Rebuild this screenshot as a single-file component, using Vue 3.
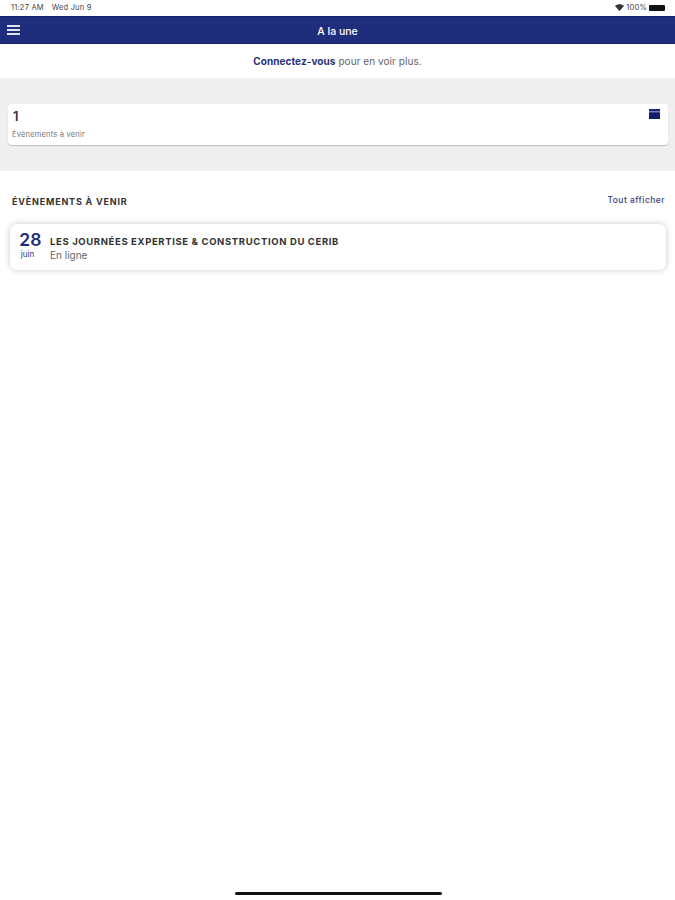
<template>
  <div class="screen">
    <div class="status-bar">
      <span>11:27 AM</span>
      <span class="status-date">Wed Jun 9</span>
      <span class="status-right">
        <svg class="wifi" viewBox="0 0 16 12" width="9" height="7">
          <path d="M8 12 0 3.500C4.500-1 11.500-1 16 3.500Z" fill="#333" />
        </svg>
        <span>100%</span>
        <span class="battery"><i></i></span>
      </span>
    </div>

    <header class="top-bar">
      <button class="menu-btn" aria-label="Menu">
        <span></span><span></span><span></span>
      </button>
      <h1>A la une</h1>
    </header>

    <div class="connect-row">
      <a class="connect-link">Connectez-vous</a> pour en voir plus.
    </div>

    <section class="stats-band">
      <div class="stat-card">
        <div>
          <div class="stat-value">1</div>
          <div class="stat-label">Évènements à venir</div>
        </div>
        <svg class="stat-icon" viewBox="0 0 11 11" width="11" height="11">
          <path d="M0 0h11v2.600H0z" fill="#1a2478" />
          <path d="M0 3.200h11V10H0z" fill="#141c6e" />
        </svg>
      </div>
    </section>

    <section class="events">
      <div class="events-head">
        <h2>ÉVÈNEMENTS À VENIR</h2>
        <a>Tout afficher</a>
      </div>
      <article v-for="event in events" :key="event.title" class="event-card">
        <div class="event-date">
          <div class="event-day">{{ event.day }}</div>
          <div class="event-month">{{ event.month }}</div>
        </div>
        <div class="event-body">
          <div class="event-title">{{ event.title }}</div>
          <div class="event-place">{{ event.place }}</div>
        </div>
      </article>
    </section>

    <div class="home-indicator"></div>
  </div>
</template>

<script setup>
const events = [
  {
    day: '28',
    month: 'juin',
    title: 'LES JOURNÉES EXPERTISE & CONSTRUCTION DU CERIB',
    place: 'En ligne'
  }
]
</script>

<style>
html,
body {
  margin: 0;
  background: #fff;
}
</style>

<style scoped>
.screen {
  position: relative;
  height: 900px;
  overflow: hidden;
  background: #fff;
  font-family: Inter, "Liberation Sans", sans-serif;
  color: #222;
}

.status-bar {
  height: 16px;
  display: flex;
  align-items: center;
  padding: 0 10px 1px 11px;
  box-sizing: border-box;
  font-size: 7.500px;
  letter-spacing: 0.2px;
  color: #444;
}

.status-date {
  margin-left: 8px;
}

.status-right {
  margin-left: auto;
  display: flex;
  align-items: center;
  gap: 2px;
}

.battery {
  display: block;
  width: 16px;
  height: 6px;
}

.battery i {
  display: block;
  height: 100%;
  background: #111;
  border-radius: 1px;
}

.top-bar {
  position: relative;
  height: 28px;
  display: flex;
  align-items: center;
  justify-content: center;
  padding-top: 2px;
  box-sizing: border-box;
  background: #1f2d7d;
  border-top: 1px solid #14206e;
  border-bottom: 1px solid #14206e;
}

.top-bar h1 {
  margin: 0;
  font-size: 10.500px;
  font-weight: 500;
  color: #fff;
}

.menu-btn {
  position: absolute;
  left: 7px;
  top: 8px;
  display: flex;
  flex-direction: column;
  gap: 2px;
  padding: 0;
  border: 0;
  background: none;
}

.menu-btn span {
  display: block;
  width: 13px;
  height: 2px;
  background: #dfe2f0;
}

.connect-row {
  height: 34px;
  display: flex;
  align-items: center;
  justify-content: center;
  gap: 3px;
  font-size: 10px;
  letter-spacing: 0.06px;
  color: #666;
}

.connect-link {
  font-weight: 700;
  color: #2a3278;
}

.stats-band {
  height: 93px;
  padding: 26px 7px 0 8px;
  box-sizing: border-box;
  background: #efefef;
}

.stat-card {
  height: 41px;
  display: flex;
  justify-content: space-between;
  padding: 5px 8px 0 4px;
  box-sizing: border-box;
  background: #fff;
  border-radius: 4px;
  box-shadow: 0 1px 1px rgba(0, 0, 0, 0.2);
}

.stat-value {
  padding-left: 1px;
  font-size: 13px;
  line-height: 14px;
  font-weight: 600;
  color: #333;
}

.stat-label {
  margin-top: 7px;
  font-size: 7.500px;
  line-height: 9px;
  letter-spacing: 0.2px;
  color: #777;
}

.stat-icon {
  margin: 0 0 0 auto;
}

.events {
  padding: 24px 9px 0 10px;
}

.events-head {
  height: 12px;
  display: flex;
  justify-content: space-between;
  align-items: center;
  padding-left: 2px;
}

.events-head h2 {
  margin: 0;
  font-size: 9px;
  font-weight: 700;
  letter-spacing: 0.8px;
  color: #333;
}

.events-head a {
  margin: 0 1px 2px 0;
  font-size: 8.500px;
  font-weight: 500;
  letter-spacing: 0.45px;
  color: #3a3f80;
}

.event-card {
  display: flex;
  align-items: center;
  height: 46px;
  margin-top: 17px;
  border-radius: 7px;
  background: #fff;
  box-shadow: 0 0 6px rgba(0, 0, 0, 0.22);
}

.event-date {
  width: 41px;
  padding-bottom: 5px;
  text-align: center;
  flex-shrink: 0;
}

.event-day {
  font-size: 17.500px;
  line-height: 20px;
  font-weight: 600;
  letter-spacing: 0.2px;
  color: #1f2d7d;
}

.event-month {
  padding-right: 6px;
  font-size: 8px;
  line-height: 9px;
  color: #2a3278;
}

.event-body {
  padding-top: 3px;
  margin-left: -1px;
}

.event-title {
  font-size: 9.500px;
  line-height: 13px;
  font-weight: 700;
  letter-spacing: 0.63px;
  color: #333;
}

.event-place {
  margin-top: 1px;
  font-size: 10px;
  line-height: 13px;
  color: #666;
}

.home-indicator {
  position: absolute;
  left: 235px;
  bottom: 5px;
  width: 207px;
  height: 3px;
  border-radius: 2px;
  background: #111;
}
</style>
